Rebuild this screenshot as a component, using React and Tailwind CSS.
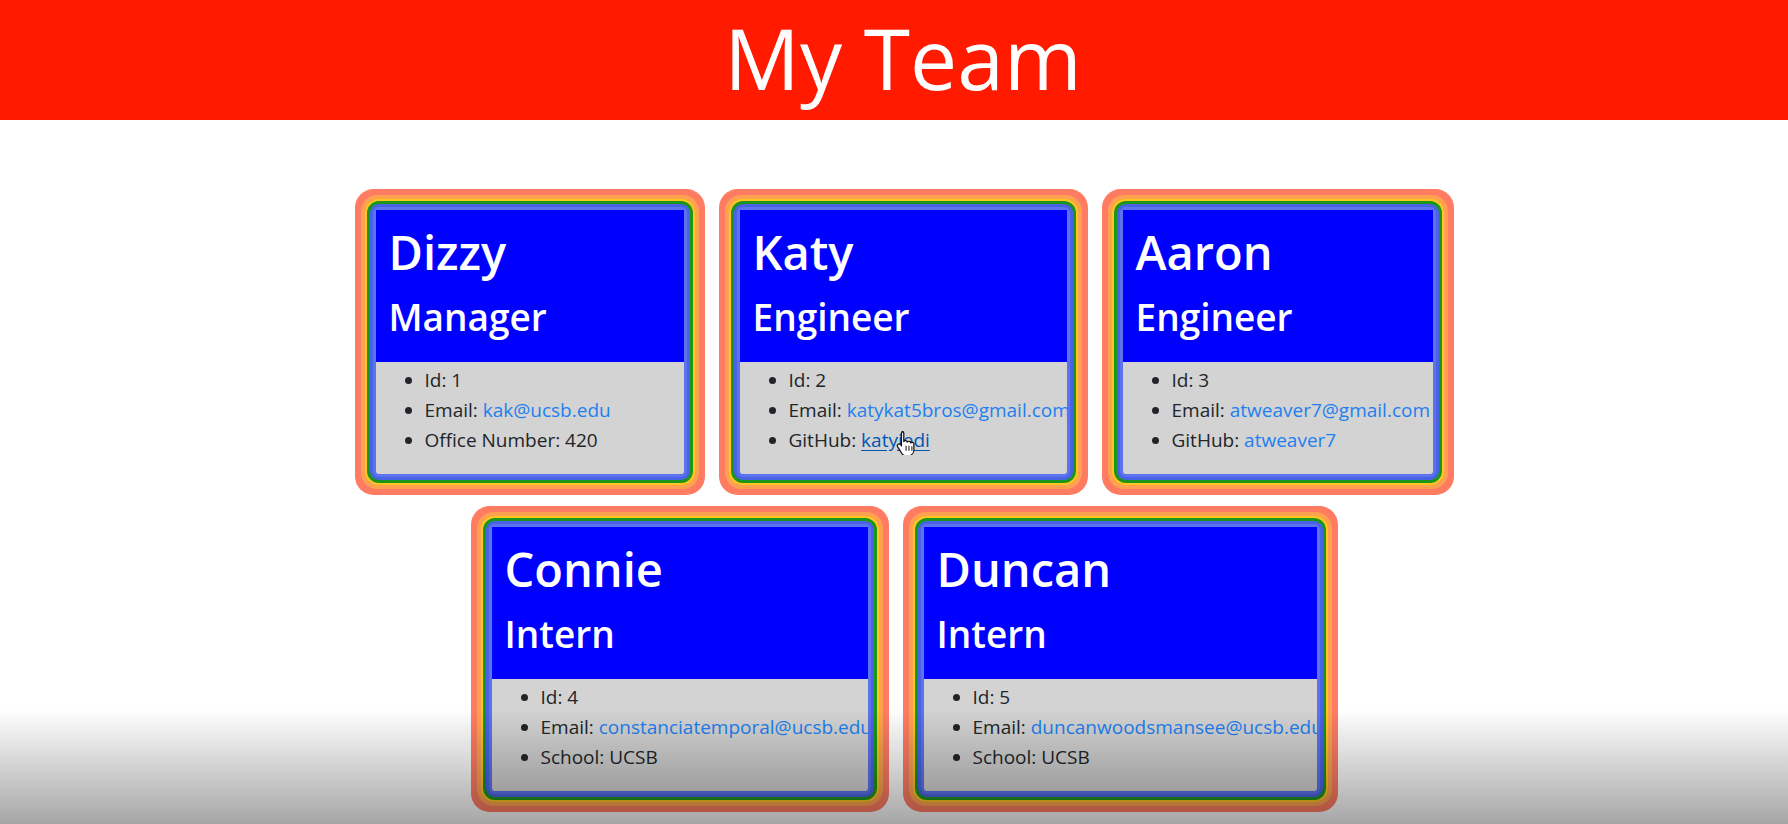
import React from 'react';

const team = [
  { name: 'Dizzy', role: 'Manager', id: 1, email: 'kak@ucsb.edu', extra: ['Office Number', '420'], width: 'w-[314px]' },
  { name: 'Katy', role: 'Engineer', id: 2, email: 'katykat5bros@gmail.com', extra: ['GitHub', 'katyjedi', true], width: 'w-[333px]', hover: true },
  { name: 'Aaron', role: 'Engineer', id: 3, email: 'atweaver7@gmail.com', extra: ['GitHub', 'atweaver7', true], width: 'w-[316px]' },
  { name: 'Connie', role: 'Intern', id: 4, email: 'constanciatemporal@ucsb.edu', extra: ['School', 'UCSB'], width: 'w-[382px]' },
  { name: 'Duncan', role: 'Intern', id: 5, email: 'duncanwoodsmansee@ucsb.edu', extra: ['School', 'UCSB'], width: 'w-[399px]' },
];

const HandCursor = () => (
  <svg width="21" height="27" viewBox="0 0 18 24" className="absolute left-[156px] top-[68px] pointer-events-none">
    <path
      d="M5 1.5c1 0 1.6.7 1.6 1.6v7.2c.3-.6.9-.9 1.5-.9.9 0 1.5.6 1.6 1.4.3-.5.8-.8 1.4-.8.9 0 1.5.7 1.6 1.5.3-.4.8-.6 1.3-.6 1 0 1.6.8 1.6 1.8v4.6c0 3.4-2.4 5.7-5.6 5.7H8.9c-1.8 0-3-.8-4-2.1L1.2 15c-.6-.8-.4-1.8.3-2.3.7-.5 1.6-.4 2.2.3l.8 1V3.1c0-.9.6-1.6 1.5-1.6z"
      fill="#fff"
      stroke="#111"
      strokeWidth="1.1"
      strokeLinejoin="round"
    />
    <path d="M8.6 14v4.5M11.2 14v4.5M13.8 14.5v4" stroke="#111" strokeWidth="0.9" />
  </svg>
);

const Card = ({ m }) => (
  <div
    className={`${m.width} h-[270px] mx-[25px] my-[23.5px] flex flex-col border-[3px] border-[#5b73ee] rounded-[6px] bg-[#d3d3d3] shadow-[0_0_0_3px_#4a63e6,0_0_0_6px_#1c951c,0_0_0_8px_#ffc61f,0_0_0_12px_#ffa250,0_0_0_18px_#ff7c62]`}
  >
    <div className="bg-[#0000ff] text-white pl-[13px] pt-[14px] h-[152px]">
      <h1 className="text-[47px] leading-[1.2] font-semibold mb-[15px]">{m.name}</h1>
      <h3 className="text-[37px] leading-[1.2] font-semibold">{m.role}</h3>
    </div>
    <ul className="relative list-disc pl-[49px] pt-[3px] text-[19px] leading-[30px] text-[#212529] whitespace-nowrap overflow-hidden">
      <li>Id: {m.id}</li>
      <li>
        Email: <a className="text-[#1d80f0]">{m.email}</a>
      </li>
      <li>
        {m.extra[0]}:{' '}
        {m.extra[2] ? (
          <a className={m.hover ? 'text-[#0056b3] underline underline-offset-[3px]' : 'text-[#1d80f0]'}>{m.extra[1]}</a>
        ) : (
          m.extra[1]
        )}
      </li>
      {m.hover && <HandCursor />}
    </ul>
  </div>
);

export default function App() {
  return (
    <div className="relative h-screen overflow-hidden bg-white font-['Open_Sans',sans-serif]">
      {/* Header */}
      <header className="h-[120px] bg-[#ff1a00] flex items-center justify-center pl-[18px]">
        <h1 className="text-white text-[84px] font-normal leading-none mt-[-4px]">My Team</h1>
      </header>

      {/* Cards */}
      <div className="pl-[20px] pt-[63px]">
        <div className="max-w-[1200px] mx-auto flex flex-wrap justify-center">
          {team.map((m) => (
            <Card key={m.id} m={m} />
          ))}
        </div>
      </div>

      {/* video shade at the bottom */}
      <div className="absolute left-0 right-0 bottom-0 h-[115px] bg-gradient-to-b from-transparent to-black/35 pointer-events-none" />
    </div>
  );
}
